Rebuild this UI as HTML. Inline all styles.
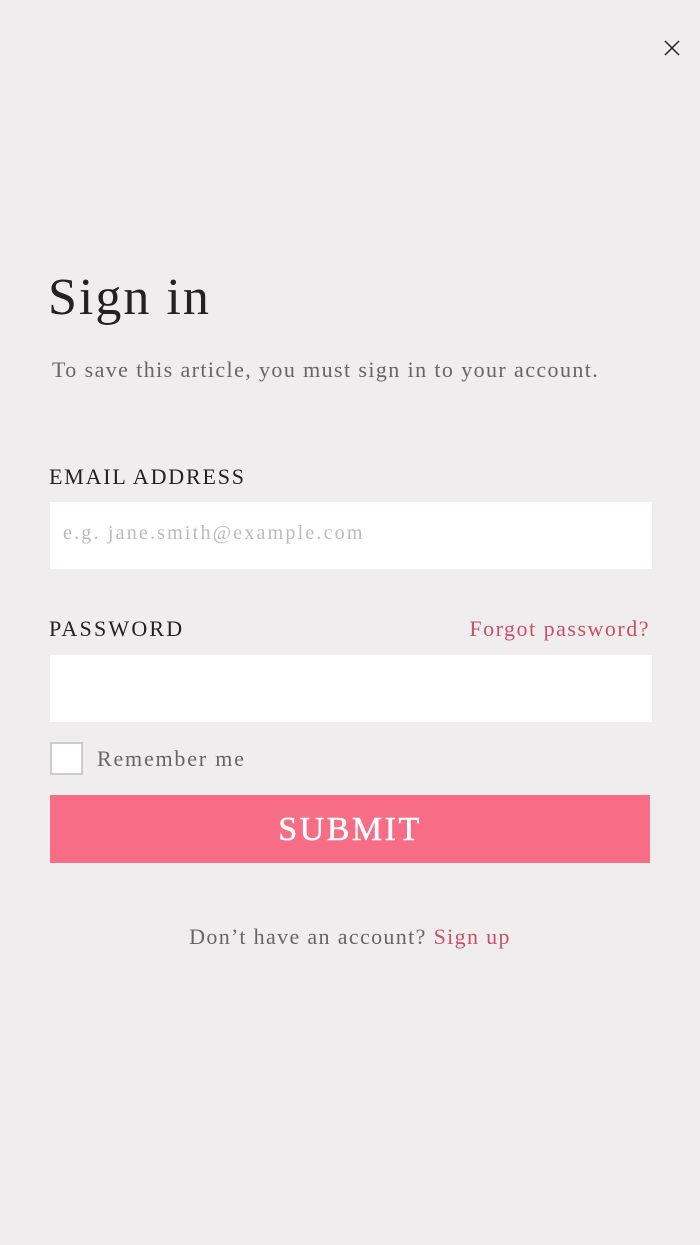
<!DOCTYPE html>
<html><head><style>
body{margin:0;width:700px;height:1245px;background:#efedee;font-family:"Liberation Serif",serif;position:relative;overflow:hidden}
.a{position:absolute;white-space:nowrap;line-height:1}
</style></head><body>
<svg class="a" style="left:663px;top:39px" width="18" height="18" viewBox="0 0 18 18"><path d="M2 2L16 16M16 2L2 16" stroke="#222" stroke-width="1.5"/></svg>
<div class="a" style="left:48px;top:272px;font-size:52px;color:#222;letter-spacing:2px">Sign in</div>
<div class="a" style="left:52px;top:359px;font-size:22px;color:#666;letter-spacing:1.4px">To save this article, you must sign in to your account.</div>
<div class="a" style="left:49px;top:466px;font-size:22px;color:#222;letter-spacing:1.8px">EMAIL ADDRESS</div>
<div class="a" style="left:50px;top:502px;width:602px;height:67px;background:#fff"></div>
<div class="a" style="left:63px;top:523px;font-size:20px;color:#bbb;letter-spacing:2.2px">e.g. jane.smith@example.com</div>
<div class="a" style="left:49px;top:618px;font-size:22px;color:#222;letter-spacing:2.2px">PASSWORD</div>
<div class="a" style="right:50px;top:618px;font-size:22px;color:#c9506a;letter-spacing:1.5px">Forgot password?</div>
<div class="a" style="left:50px;top:655px;width:602px;height:67px;background:#fff"></div>
<div class="a" style="left:50px;top:742px;width:29px;height:29px;background:#fff;border:2px solid #ccc"></div>
<div class="a" style="left:97px;top:748px;font-size:22px;color:#666;letter-spacing:1.8px">Remember me</div>
<div class="a" style="left:50px;top:795px;width:600px;height:68px;background:#f76d85"></div>
<div class="a" style="left:50px;top:813px;width:600px;text-align:center;font-size:34px;color:#fff;letter-spacing:2.5px;-webkit-text-stroke:0.5px #fff">SUBMIT</div>
<div class="a" style="left:0;top:926px;width:700px;text-align:center;font-size:22px;color:#666;letter-spacing:1.35px">Don’t have an account? <span style="color:#c9506a">Sign up</span></div>
</body></html>
